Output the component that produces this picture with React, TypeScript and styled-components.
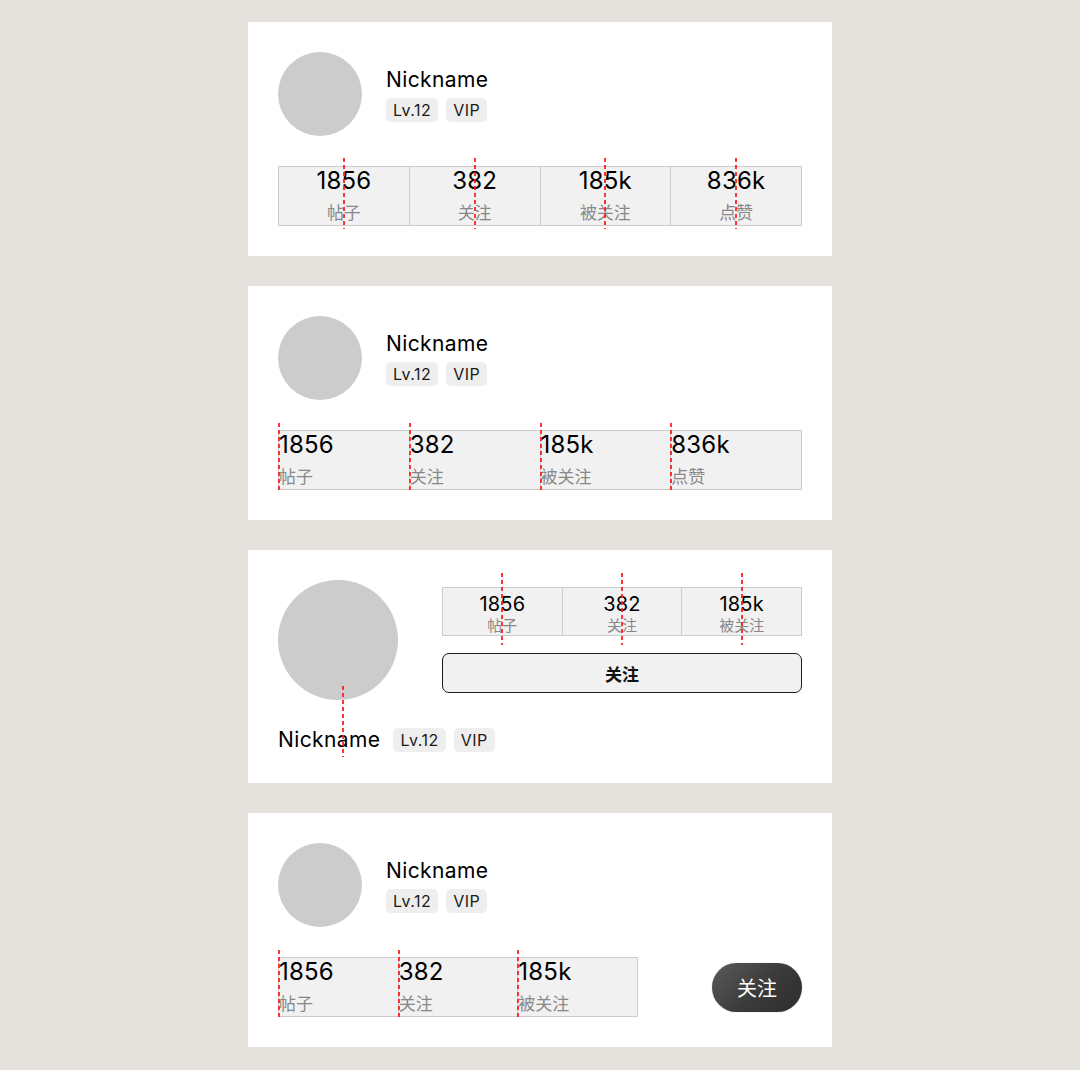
import React from "react";
import styled, { createGlobalStyle, css } from "styled-components";

const GlobalStyle = createGlobalStyle`
  html, body {
    margin: 0;
    padding: 0;
    background: #e5e2de;
  }
  body {
    font-family: "Inter", "Noto Sans CJK SC", sans-serif;
    color: #000;
  }
  * { box-sizing: border-box; }
`;

const Page = styled.div`
  display: flex;
  flex-direction: column;
  align-items: center;
  gap: 30px;
  padding: 22px 0 23px;
`;

const Card = styled.section`
  position: relative;
  width: 584px;
  background: #ffffff;
  padding: 30px;
`;

const Header = styled.div`
  display: flex;
  align-items: center;
  gap: 24px;
`;

const Avatar = styled.div<{ $size: number }>`
  flex: none;
  width: ${(p) => p.$size}px;
  height: ${(p) => p.$size}px;
  border-radius: 50%;
  background: #cccccc;
`;

const Info = styled.div`
  display: flex;
  flex-direction: column;
  gap: 5px;
`;

const Name = styled.div`
  font-size: 21px;
  line-height: 26px;
  letter-spacing: 0.4px;
  color: #000;
`;

const Badges = styled.div`
  display: flex;
  gap: 8px;
`;

const Badge = styled.span`
  display: inline-block;
  height: 24px;
  line-height: 24px;
  padding: 0 7px;
  border-radius: 5px;
  background: #eeeeee;
  font-size: 16px;
  letter-spacing: 0.5px;
  color: #1a1a1a;
`;

type Variant = "large" | "small";

const Stats = styled.div<{ $cols: number; $width?: number; $mt?: number }>`
  display: grid;
  grid-template-columns: repeat(${(p) => p.$cols}, 1fr);
  gap: 1px;
  width: ${(p) => (p.$width ? `${p.$width}px` : "100%")};
  margin-top: ${(p) => p.$mt ?? 0}px;
  border: 1px solid #cccccc;
  background: #cccccc;
`;

const Cell = styled.div<{
  $align: "center" | "left";
  $variant: Variant;
  $gTop: number;
  $gBottom: number;
}>`
  position: relative;
  display: flex;
  flex-direction: column;
  align-items: ${(p) => (p.$align === "center" ? "center" : "flex-start")};
  background: #f1f1f1;
  ${(p) =>
    p.$variant === "large"
      ? css`
          padding: 0;
        `
      : css`
          padding: 5px 0 0;
        `}

  &::after {
    content: "";
    position: absolute;
    top: ${(p) => -p.$gTop}px;
    bottom: ${(p) => -p.$gBottom}px;
    width: 2px;
    ${(p) =>
      p.$align === "center"
        ? css`
            left: calc(50% - 1px);
          `
        : css`
            left: -1px;
          `}
    background: repeating-linear-gradient(
      to bottom,
      rgba(255, 30, 30, 0.9) 0 4px,
      transparent 4px 7px
    );
  }
`;

const Num = styled.div<{ $variant: Variant }>`
  color: #000;
  font-size: ${(p) => (p.$variant === "large" ? 24 : 20)}px;
  line-height: ${(p) => (p.$variant === "large" ? 28 : 22)}px;
  letter-spacing: 0.2px;
`;

const Label = styled.div<{ $variant: Variant }>`
  color: #888888;
  font-size: ${(p) => (p.$variant === "large" ? 17 : 15)}px;
  line-height: ${(p) => (p.$variant === "large" ? 24 : 18)}px;
  margin-top: ${(p) => (p.$variant === "large" ? 6 : 2)}px;
`;

const TopRow = styled.div`
  display: flex;
  align-items: center;
  gap: 44px;
`;

const RightCol = styled.div`
  flex: 1;
  display: flex;
  flex-direction: column;
  gap: 17px;
`;

const OutlineButton = styled.button`
  height: 40px;
  border: 1.5px solid #1a1a1a;
  border-radius: 7px;
  background: #f1f1f1;
  font-family: inherit;
  font-size: 17px;
  font-weight: 700;
  color: #111;
`;

const NameRow = styled.div`
  display: flex;
  align-items: center;
  gap: 13px;
  margin-top: 27px;
`;

const Guide = styled.div`
  position: absolute;
  left: 94px;
  top: 136px;
  height: 71px;
  width: 2px;
  background: repeating-linear-gradient(
    to bottom,
    rgba(255, 30, 30, 0.9) 0 4px,
    transparent 4px 7px
  );
`;

const BottomRow = styled.div`
  display: flex;
  align-items: center;
  justify-content: space-between;
  margin-top: 30px;
`;

const PillButton = styled.button`
  width: 90px;
  height: 49px;
  border: none;
  border-radius: 25px;
  background: linear-gradient(135deg, #5a5a5a 0%, #3a3a3a 55%, #2e2e2e 100%);
  box-shadow: 0 0 1px rgba(0, 0, 0, 0.4);
  color: #ffffff;
  font-family: inherit;
  font-size: 20px;
`;

const allStats = [
  { n: "1856", l: "帖子" },
  { n: "382", l: "关注" },
  { n: "185k", l: "被关注" },
  { n: "836k", l: "点赞" },
];

const Profile = ({ size = 84 }: { size?: number }) => (
  <Header>
    <Avatar $size={size} />
    <Info>
      <Name>Nickname</Name>
      <Badges>
        <Badge>Lv.12</Badge>
        <Badge>VIP</Badge>
      </Badges>
    </Info>
  </Header>
);

const StatGrid = ({
  count,
  align,
  variant,
  gTop,
  gBottom,
  width,
  mt,
}: {
  count: number;
  align: "center" | "left";
  variant: Variant;
  gTop: number;
  gBottom: number;
  width?: number;
  mt?: number;
}) => (
  <Stats $cols={count} $width={width} $mt={mt}>
    {allStats.slice(0, count).map((s) => (
      <Cell key={s.l} $align={align} $variant={variant} $gTop={gTop} $gBottom={gBottom}>
        <Num $variant={variant}>{s.n}</Num>
        <Label $variant={variant}>{s.l}</Label>
      </Cell>
    ))}
  </Stats>
);

export default function App() {
  return (
    <>
      <GlobalStyle />
      <Page>
        <Card>
          <Profile />
          <StatGrid count={4} align="center" variant="large" gTop={9} gBottom={4} mt={30} />
        </Card>

        <Card>
          <Profile />
          <StatGrid count={4} align="left" variant="large" gTop={8} gBottom={3} mt={30} />
        </Card>

        <Card>
          <TopRow>
            <Avatar $size={120} />
            <RightCol>
              <StatGrid count={3} align="center" variant="small" gTop={15} gBottom={10} />
              <OutlineButton>关注</OutlineButton>
            </RightCol>
          </TopRow>
          <NameRow>
            <Name>Nickname</Name>
            <Badges>
              <Badge>Lv.12</Badge>
              <Badge>VIP</Badge>
            </Badges>
          </NameRow>
          <Guide />
        </Card>

        <Card>
          <Profile />
          <BottomRow>
            <StatGrid count={3} align="left" variant="large" gTop={8} gBottom={3} width={360} />
            <PillButton>关注</PillButton>
          </BottomRow>
        </Card>
      </Page>
    </>
  );
}
